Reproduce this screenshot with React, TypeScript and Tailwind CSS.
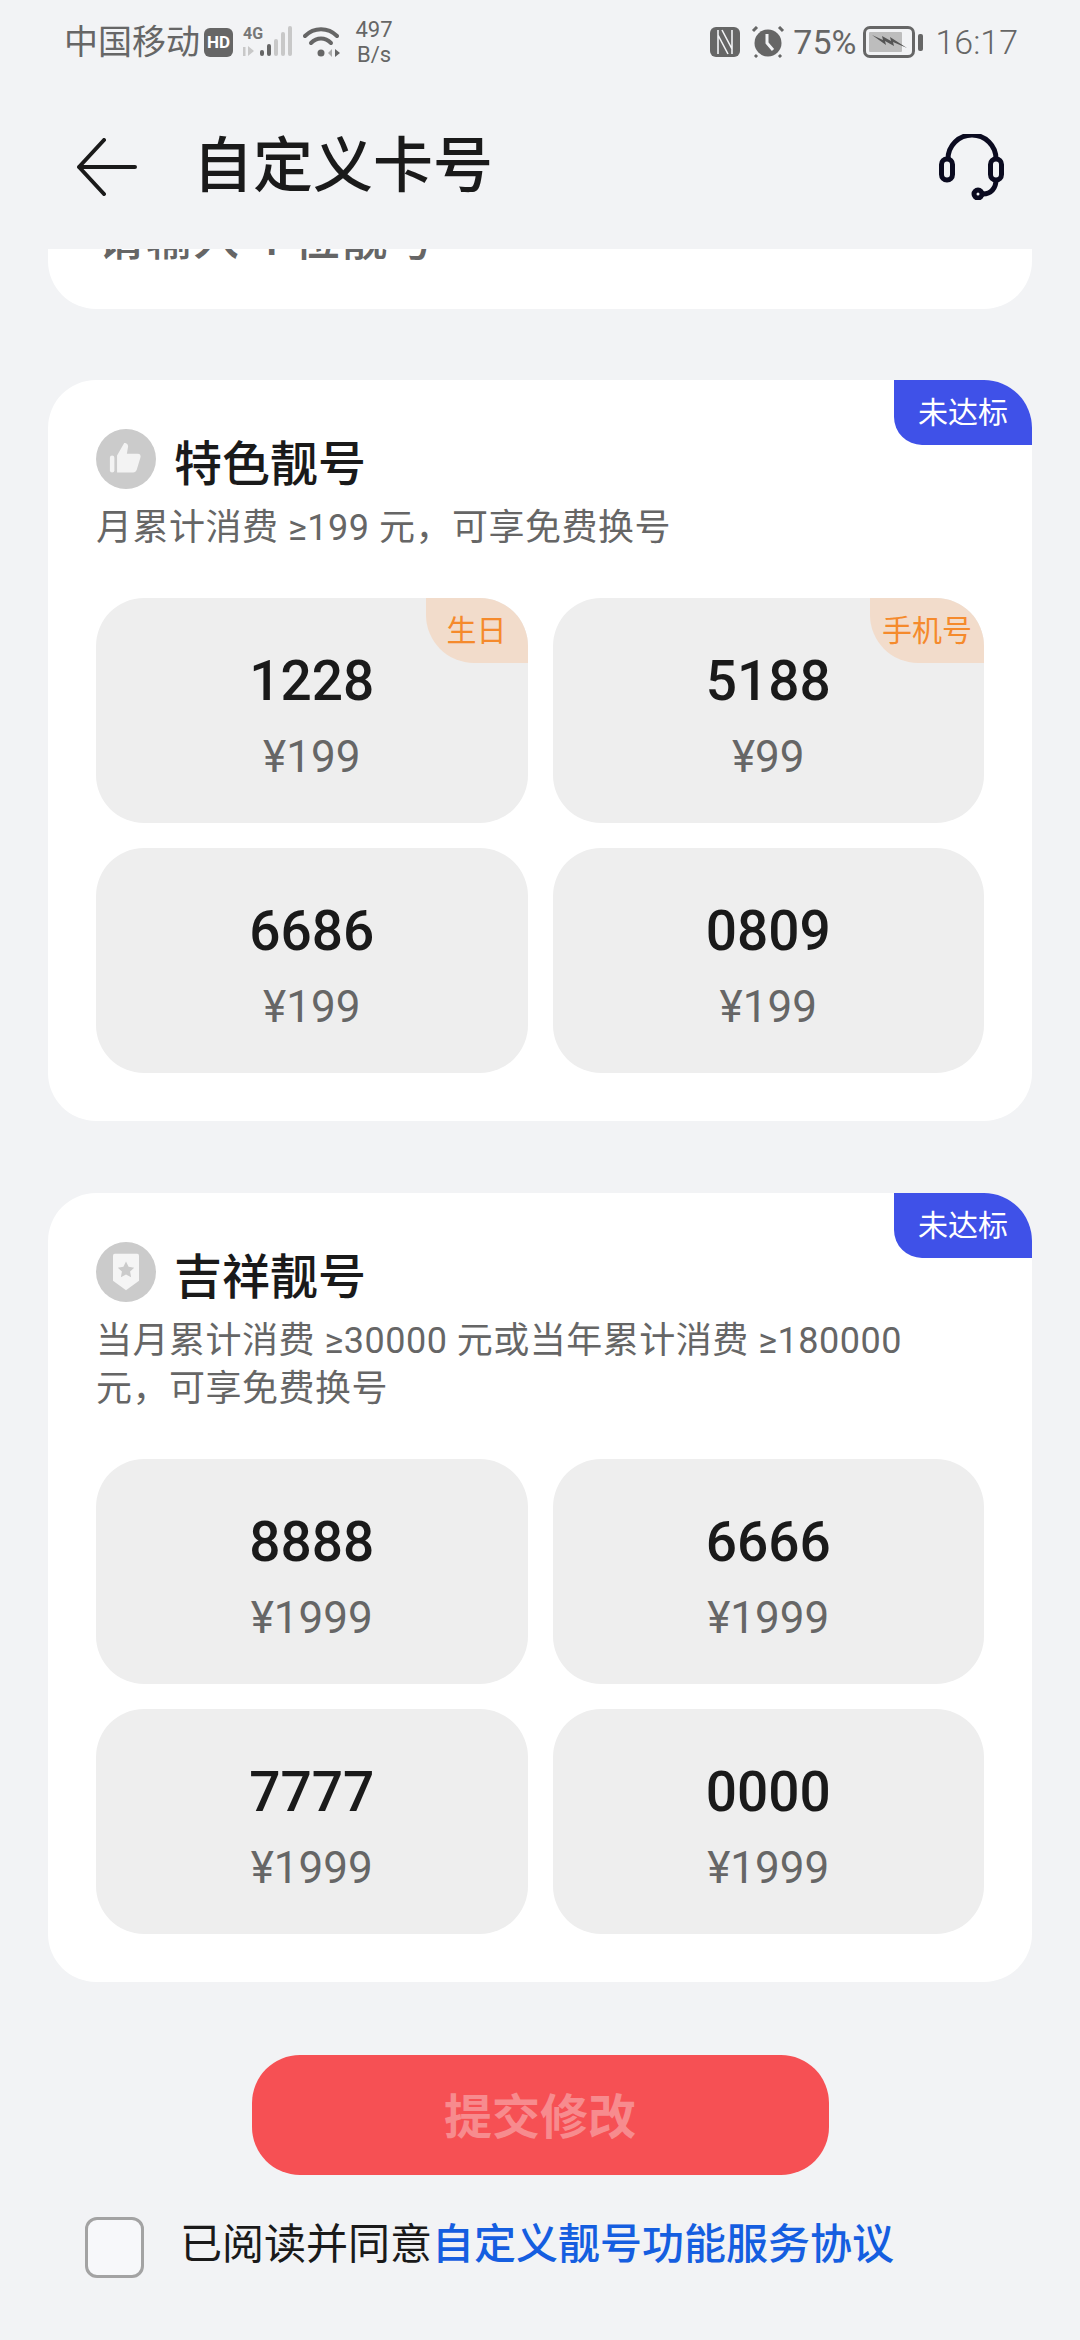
import React from 'react';

const cjk = "font-['Roboto','Noto_Sans_CJK_SC',sans-serif]";

type Num = { value: string; price: string; tag?: string };

const featured: Num[] = [
  { value: '1228', price: '¥199', tag: '生日' },
  { value: '5188', price: '¥99', tag: '手机号' },
  { value: '6686', price: '¥199' },
  { value: '0809', price: '¥199' },
];

const lucky: Num[] = [
  { value: '8888', price: '¥1999' },
  { value: '6666', price: '¥1999' },
  { value: '7777', price: '¥1999' },
  { value: '0000', price: '¥1999' },
];

const StatusBar = () => (
  <div className="h-[84px] pl-[64px] pr-[62px] flex items-center justify-between text-[#666666]">
    <div className="flex items-center">
      <span className="text-[34px] leading-none">中国移动</span>
      <span className="ml-[4px] w-[29px] h-[29px] rounded-[6px] bg-[#666666] text-white text-[17px] font-bold flex items-center justify-center leading-none">HD</span>
      <svg width="50" height="32" viewBox="0 0 50 32" className="ml-[10px] overflow-visible">
        <text x="0" y="13" fontSize="16" fontWeight="700" fill="#777" fontFamily="Roboto">4G</text>
        <rect x="0" y="21" width="2.500" height="9" fill="#c8c8c8" />
        <path d="M5 20v10l6-5z" fill="#c8c8c8" />
        <rect x="17" y="24" width="4" height="6" rx="2" fill="#666" />
        <rect x="24" y="18" width="4" height="12" rx="2" fill="#666" />
        <rect x="31" y="13" width="4" height="17" rx="2" fill="#c8c8c8" />
        <rect x="38" y="6" width="4" height="24" rx="2" fill="#c8c8c8" />
        <rect x="45" y="0" width="4" height="30" rx="2" fill="#c8c8c8" />
      </svg>
      <svg width="38" height="34" viewBox="0 0 38 34" className="ml-[10px]" fill="none">
        <path d="M2 11C11 2 25 2 34 11" stroke="#666" strokeWidth="4" strokeLinecap="round" />
        <path d="M8 18C14 12 22 12 28 18" stroke="#666" strokeWidth="4" strokeLinecap="round" />
        <circle cx="18" cy="28" r="3.500" fill="#666" />
        <path d="M29 24v8l-4-4z" fill="#aaa" />
        <path d="M32 24v8l5-4z" fill="#666" />
      </svg>
      <div className="ml-[13px] w-[40px] flex flex-col items-center text-[22px] leading-[25px] font-['Roboto',sans-serif]">
        <span>497</span>
        <span>B/s</span>
      </div>
    </div>
    <div className="flex items-center">
      <svg width="30" height="30" viewBox="0 0 30 30" fill="none">
        <rect width="30" height="30" rx="6" fill="#666" />
        <path d="M8 3V27M22 3V27M12 3L22 22M8 8L18 27" stroke="#f2f3f5" strokeWidth="1.600" />
      </svg>
      <svg width="34" height="32" viewBox="0 0 34 32" className="ml-[11px]" fill="none">
        <circle cx="17" cy="17" r="13.500" fill="#666" />
        <path d="M16 8v9l6 7" stroke="#f2f3f5" strokeWidth="3" />
        <path d="M2 5l4-4M32 5l-4-4M6 29l-2 2M28 29l2 2" stroke="#666" strokeWidth="3" />
      </svg>
      <span className="ml-[8px] text-[34px] leading-none font-['Roboto',sans-serif]">75%</span>
      <div className="ml-[7px] relative w-[52px] h-[32px] border-[3px] border-[#666666] rounded-[7px] p-[3px]">
        <div className="h-full w-[82%] bg-[#bdbdbd] rounded-[1px]" />
        <svg width="40" height="18" viewBox="0 0 40 18" className="absolute left-[3px] top-[3px]">
          <path d="M3 3l11 5-1-4 9 5-1-4 17 11-14-6 1 4-9-5 1 4z" fill="#555" />
        </svg>
      </div>
      <div className="ml-[3px] w-[5px] h-[17px] bg-[#666666] rounded-[2px]" />
      <span className="ml-[12px] text-[34px] leading-none font-['Roboto',sans-serif] font-light">16:17</span>
    </div>
  </div>
);

const Header = () => (
  <div className="h-[165px] pl-[77px] pr-[76px] flex items-center justify-between">
    <div className="flex items-center">
      <svg width="60" height="58" viewBox="0 0 60 58" fill="none">
        <path d="M27 2L2 29l25 27M2 29h56" stroke="#1a1a1a" strokeWidth="4" strokeLinecap="round" strokeLinejoin="round" />
      </svg>
      <h1 className="ml-[56px] text-[60px] leading-none font-medium text-[#1a1a1a]">自定义卡号</h1>
    </div>
    <svg width="65" height="66" viewBox="0 0 65 66" fill="none" stroke="#0b0b20" strokeWidth="5">
      <path d="M9 25A24 24 0 0 1 57 25" />
      <rect x="2.500" y="25" width="11" height="21" rx="5.500" />
      <rect x="51.500" y="25" width="11" height="21" rx="5.500" />
      <path d="M57 46C57 54 52 60 44 60" />
      <circle cx="39" cy="60" r="4" />
    </svg>
  </div>
);

const NumberCell = ({ item }: { item: Num }) => (
  <div className="relative h-[225px] rounded-[48px] bg-[#eeeeee] overflow-hidden flex flex-col items-center pt-[50px]">
    {item.tag && (
      <div className={`absolute right-0 top-0 h-[65px] bg-[#f2dccb] rounded-bl-[48px] flex items-center text-[30px] leading-none text-[#f58a2c] ${item.tag.length === 2 ? 'px-[21px]' : 'px-[12px]'}`}>
        {item.tag}
      </div>
    )}
    <span className="text-[55px] leading-[66px] font-medium text-[#1a1a1a] font-['Roboto',sans-serif]">{item.value}</span>
    <span className="mt-[18px] text-[44px] leading-[50px] text-[#666666] font-['Roboto',sans-serif]">{item.price}</span>
  </div>
);

const Section = ({ icon, title, desc, items, descClass }: { icon: React.ReactNode; title: string; desc: string; items: Num[]; descClass: string }) => (
  <section className="relative rounded-[48px] bg-white px-[48px] pt-[49px] pb-[48px] overflow-hidden">
    <div className="absolute right-0 top-0 w-[138px] h-[65px] bg-[#3f51e8] rounded-bl-[28px] flex items-center justify-center text-[30px] leading-none text-white">未达标</div>
    <div className="flex items-center h-[60px]">
      <div className="w-[60px] h-[60px] rounded-full bg-[#cbcbcb] flex items-center justify-center">{icon}</div>
      <h2 className="ml-[18px] mt-[11px] text-[48px] leading-none font-medium text-[#1a1a1a]">{title}</h2>
    </div>
    <p className={`mt-[15px] text-[36px] leading-[48px] text-[#666666] tracking-[0.5px] ${descClass}`}>{desc}</p>
    <div className="mt-[46px] grid grid-cols-2 gap-x-[25px] gap-y-[25px]">
      {items.map((item) => (
        <NumberCell key={item.value} item={item} />
      ))}
    </div>
  </section>
);

export default function App() {
  return (
    <div className={`w-[1080px] h-[2340px] bg-[#f2f3f5] overflow-hidden flex flex-col ${cjk}`}>
      <StatusBar />
      <Header />
      {/* the first card has scrolled under the header */}
      <div className="mx-[48px] h-[60px] shrink-0 rounded-b-[48px] bg-white overflow-hidden pl-[50px]">
        <p className="-mt-[34px] text-[46px] leading-[48px] font-medium text-[#666666] whitespace-pre tracking-[1.5px]">请输入 4 位靓号</p>
      </div>
      <div className="mt-[71px] mx-[48px] flex flex-col gap-[72px]">
        <Section
          title="特色靓号"
          desc="月累计消费 ≥199 元，可享免费换号"
          descClass=""
          items={featured}
          icon={
            <svg width="34" height="34" viewBox="0 0 38 38" fill="#f3f3f3">
              <rect x="1" y="15" width="5" height="19" rx="2.500" />
              <path d="M9 15L17 1c4 0 5 3 4 6l-1 6h12c3 0 4 2 3 5l-4 13c-1 2-2 3-4 3H9z" />
            </svg>
          }
        />
        <Section
          title="吉祥靓号"
          desc="当月累计消费 ≥30000 元或当年累计消费 ≥180000 元，可享免费换号"
          descClass="pr-[30px]"
          items={lucky}
          icon={
            <svg width="26" height="40" viewBox="0 0 30 42">
              <path d="M2 0h26a2 2 0 0 1 2 2v29L15 42 0 31V2a2 2 0 0 1 2-2z" fill="#f5f5f5" />
              <path d="M15 9l3 6 6.500 1-4.800 4.500 1.200 6.500L15 24l-5.900 3 1.200-6.500L5.500 16l6.500-1z" fill="#cbcbcb" />
            </svg>
          }
        />
      </div>
      <button className="mt-[73px] mx-auto w-[577px] h-[120px] shrink-0 rounded-[48px] bg-[#f65054] pt-[5px] text-[48px] font-bold text-[#f78b8e] leading-none">提交修改</button>
      <div className="mt-[42px] ml-[85px] flex items-center">
        <div className="w-[59px] h-[61px] rounded-[12px] border-[3px] border-[#a3a3a3] bg-[#f7f8fa] shrink-0" />
        <p className="ml-[36px] -mt-[6px] text-[42px] leading-none text-[#1a1a1a]">
          已阅读并同意<span className="font-medium text-[#155ee0]">自定义靓号功能服务协议</span>
        </p>
      </div>
    </div>
  );
}
